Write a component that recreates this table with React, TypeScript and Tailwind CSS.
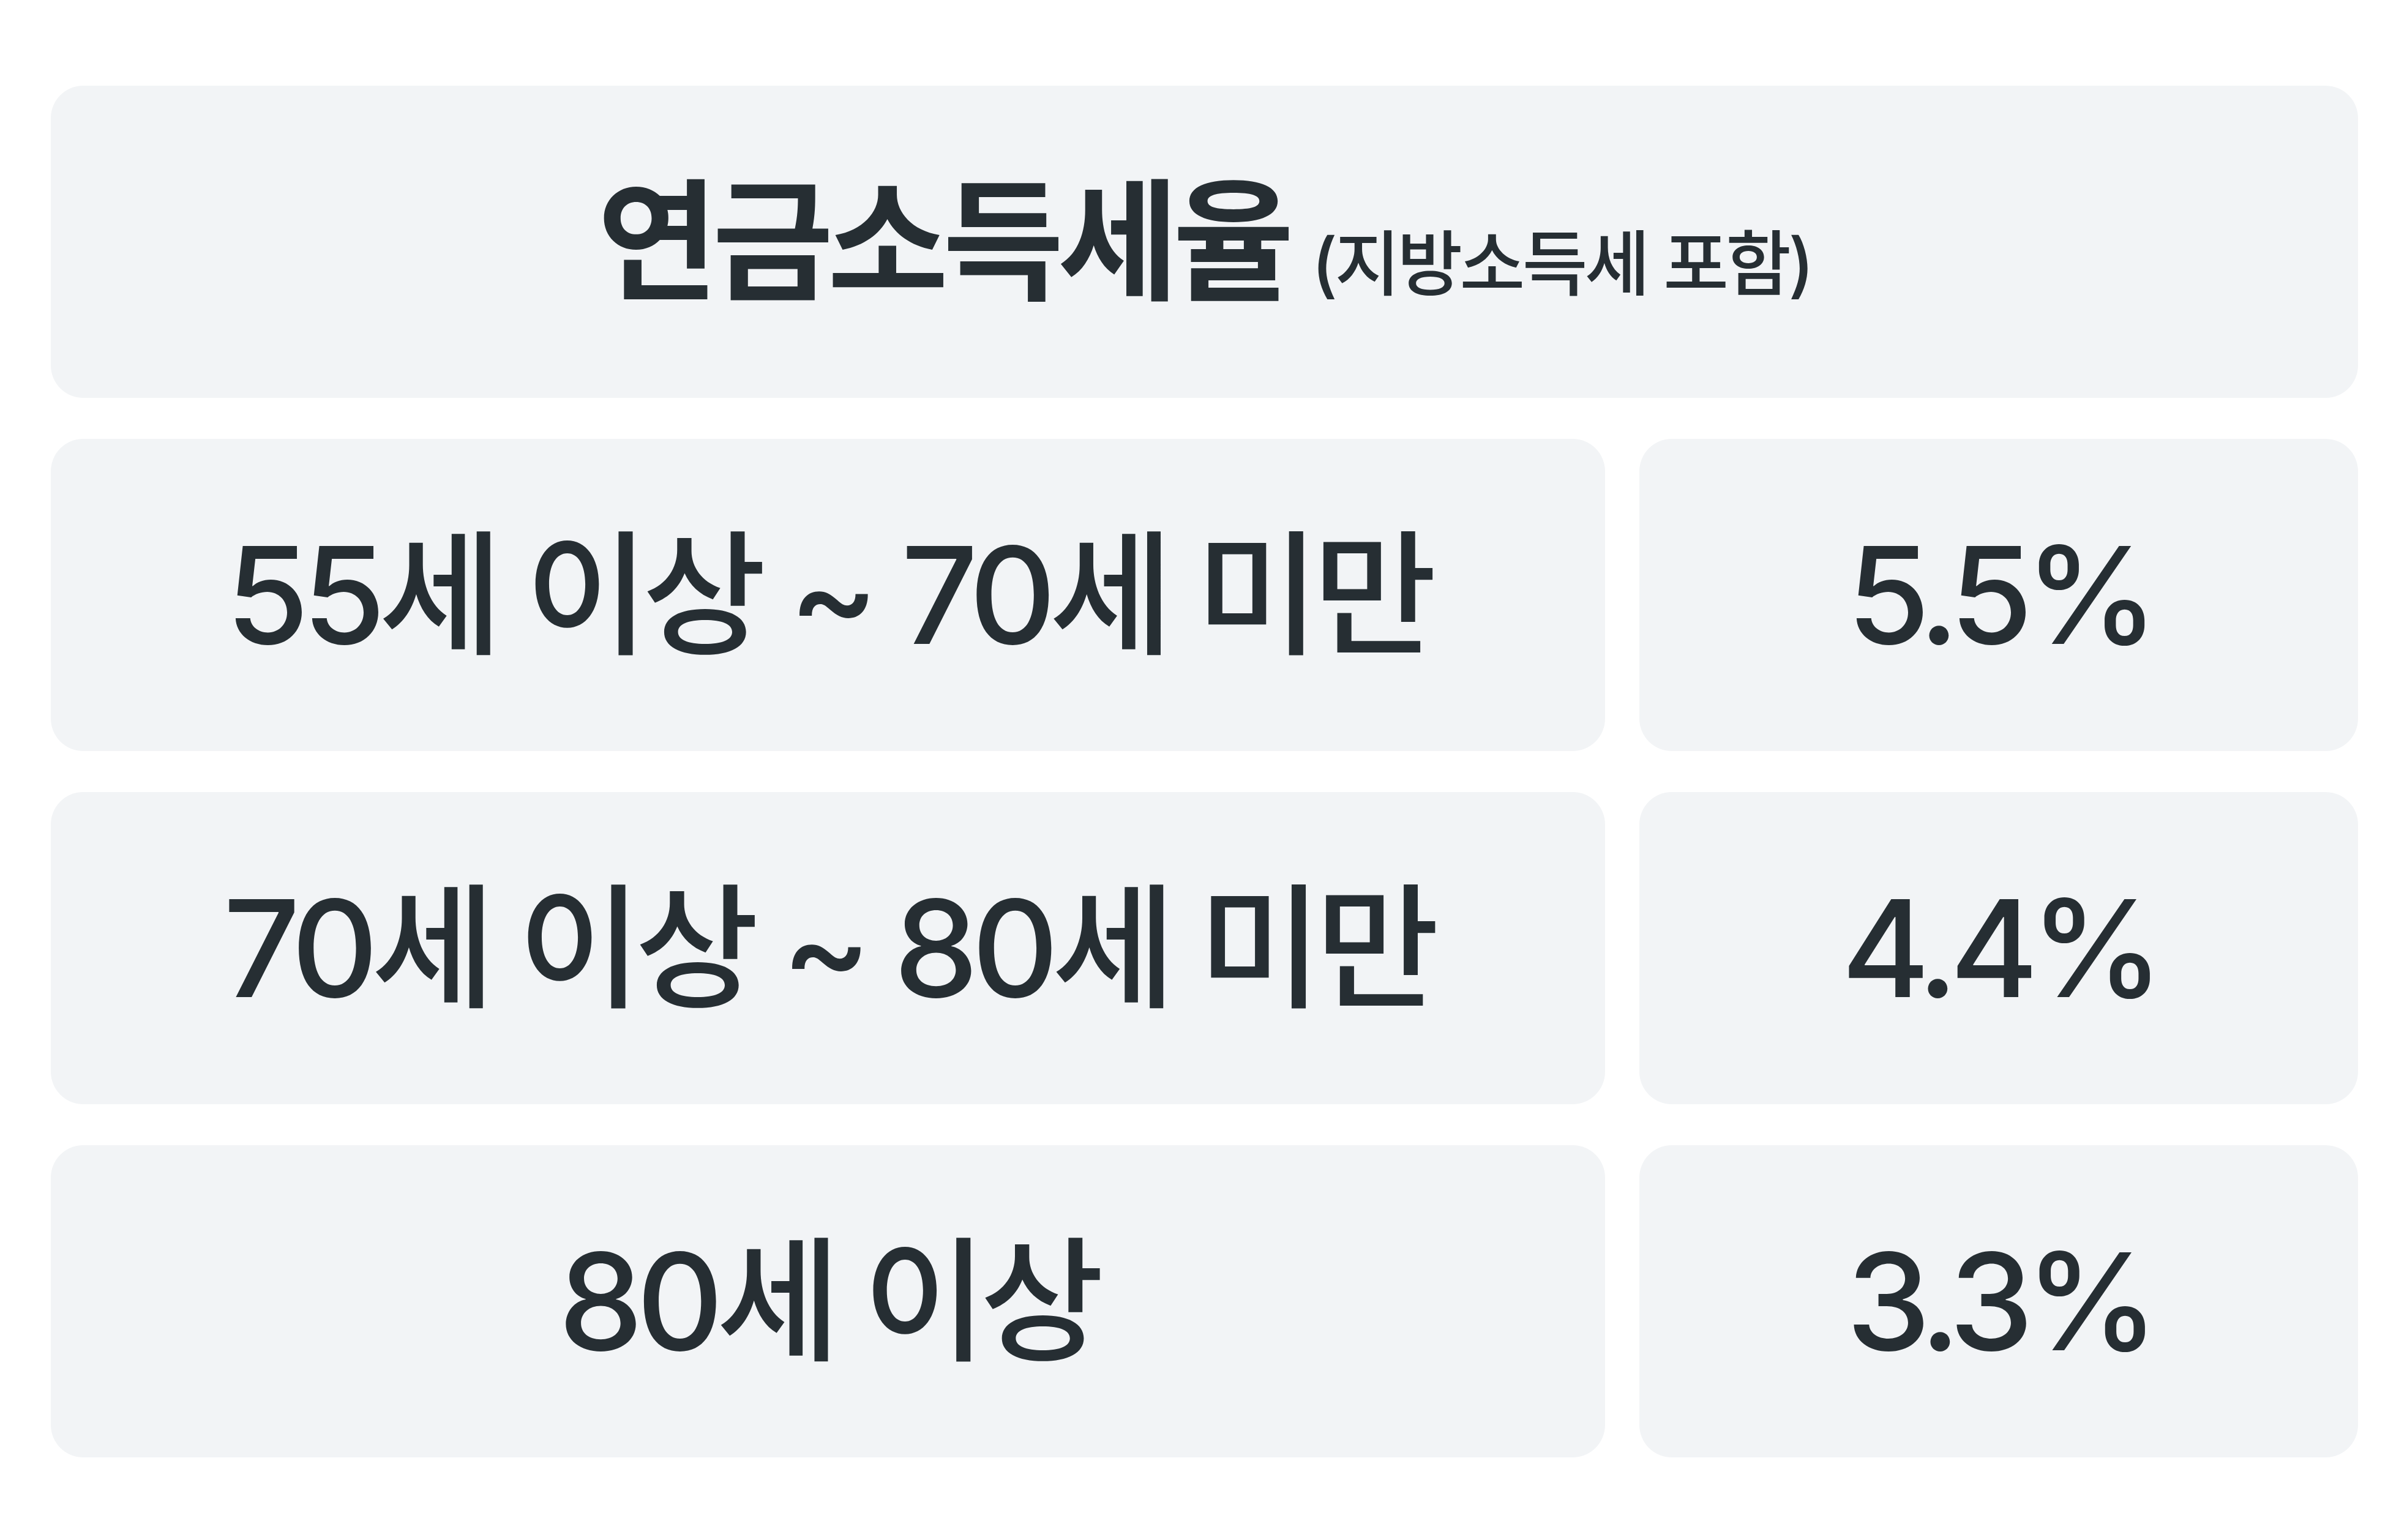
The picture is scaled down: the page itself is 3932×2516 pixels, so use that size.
const rows = [
  { age: "55세 이상 ~ 70세 미만", rate: "5.5%" },
  { age: "70세 이상 ~ 80세 미만", rate: "4.4%" },
  { age: "80세 이상", rate: "3.3%" },
]

const font = "font-['Inter','Noto_Sans_CJK_KR',sans-serif]"

export default function App() {
  return (
    <div className={`w-[3932px] h-[2516px] bg-white pt-[140px] pl-[83px] pr-[80px] flex flex-col gap-[67px] text-[#262e33] ${font}`}>
      <div className="h-[510px] rounded-[53px] bg-[#f2f4f6] flex items-center justify-center">
        <div className="flex items-baseline gap-[38px]">
          <h1 className="text-[215px] font-bold leading-none tracking-[-0.045em]">연금소득세율</h1>
          <span className="text-[116px] font-medium leading-none tracking-[-0.04em]">(지방소득세 포함)</span>
        </div>
      </div>

      <div className="grid grid-cols-[2539px_1174px] gap-x-[56px] gap-y-[67px]">
        {rows.map((r) => (
          <div key={r.rate} className="contents">
            <div className="h-[510px] rounded-[53px] bg-[#f2f4f6] flex items-center justify-center">
              <span className="text-[220px] font-medium leading-none tracking-[-0.05em]">{r.age}</span>
            </div>
            <div className="h-[510px] rounded-[53px] bg-[#f2f4f6] flex items-center justify-center">
              <span className="text-[220px] font-medium leading-none tracking-[-0.06em]">{r.rate}</span>
            </div>
          </div>
        ))}
      </div>
    </div>
  )
}
